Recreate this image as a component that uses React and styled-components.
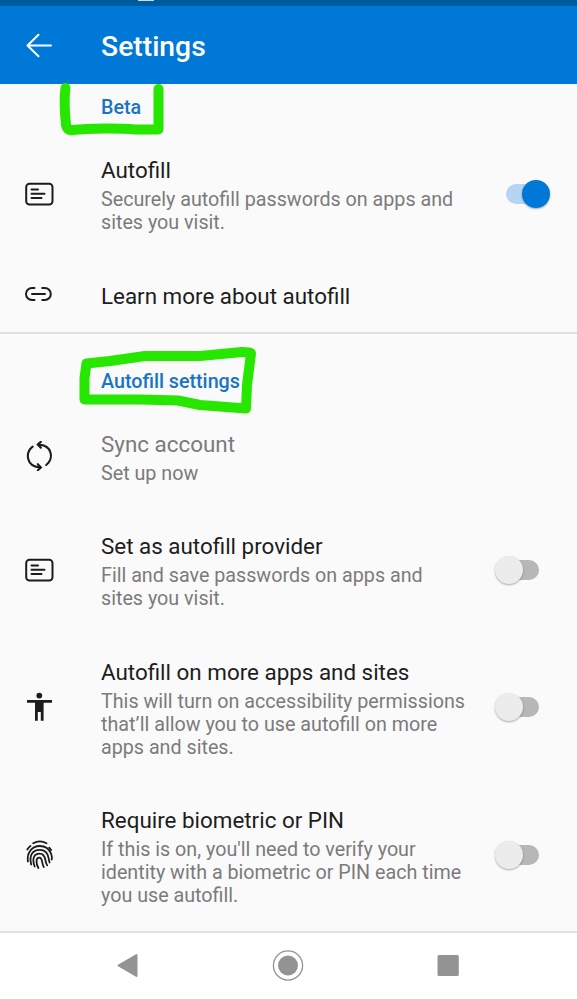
import React, { useState } from "react"
import styled, { createGlobalStyle } from "styled-components"

const GlobalStyle = createGlobalStyle`
  * {
    box-sizing: border-box;
  }

  body {
    margin: 0;
    background: #fafafa;
    font-family: Roboto, "Liberation Sans", sans-serif;
  }
`

const Screen = styled.div`
  position: relative;
  display: flex;
  flex-direction: column;
  width: 577px;
  height: 999px;
  overflow: hidden;
  background: #fafafa;
`

const StatusBar = styled.div`
  flex: none;
  height: 6px;
  padding-left: 138px;
  background: #005a9e;
`

const StatusMark = styled.div`
  width: 16px;
  height: 1px;
  background: #c4dcee;
`

const Header = styled.header`
  flex: none;
  display: flex;
  align-items: center;
  height: 78px;
  padding: 3px 0 0 25px;
  background: #0078d7;
`

const BackButton = styled.button`
  width: 76px;
  height: 30px;
  padding: 0 0 2px;
  border: none;
  background: none;
  color: #fff;
  text-align: left;
  cursor: pointer;
`

const PageTitle = styled.h1`
  margin: 0;
  color: #fff;
  font-size: 28.3px;
  font-weight: 500;
  line-height: 34px;
`

const Main = styled.main`
  flex: none;
  height: 847px;
`

const Section = styled.section`
  border-bottom: ${props => (props.$divided ? "2px solid #e0e0e0" : "none")};
`

const SectionTitle = styled.h2`
  margin: 0;
  padding: ${props => props.$top}px 0 ${props => props.$bottom}px 101px;
  color: #1874c4;
  font-size: 19.7px;
  font-weight: 500;
  line-height: 24px;
`

const Row = styled.div`
  display: grid;
  grid-template-columns: 76px 385px 1fr;
  align-items: center;
  padding: ${props => (props.$compact ? "22.3px 26px 23.2px 25px" : "22.7px 26px 22.7px 25px")};
`

const IconBox = styled.div`
  height: 30px;
  color: #1c1c1c;
`

const RowBody = styled.div`
  padding-top: 3px;
`

const RowTitle = styled.div`
  color: ${props => (props.$muted ? "#7b7b7b" : "#1d1d1d")};
  font-size: 22.4px;
  line-height: 26px;
  white-space: nowrap;
`

const RowText = styled.div`
  margin-top: 5px;
  color: #7b7b7b;
  font-size: 19.72px;
  line-height: 23px;
  white-space: pre-line;
`

const Switch = styled.button`
  display: flex;
  align-items: center;
  justify-content: ${props => (props.$on ? "flex-end" : "flex-start")};
  justify-self: ${props => (props.$on ? "end" : "start")};
  width: 33px;
  height: 20px;
  margin-left: ${props => (props.$on ? 0 : 20)}px;
  margin-right: ${props => (props.$on ? 12 : 0)}px;
  padding: 0;
  border: none;
  border-radius: 10px;
  background: ${props => (props.$on ? "#b5d5f0" : "#b7b7b7")};
  cursor: pointer;
`

const Thumb = styled.span`
  flex: none;
  width: 28px;
  height: 28px;
  margin: 0 -11px;
  border-radius: 50%;
  background: ${props => (props.$on ? "#0078d7" : "#ececec")};
  box-shadow: 0 1px 2px rgba(0, 0, 0, 0.32);
`

const NavBar = styled.nav`
  flex: 1;
  display: grid;
  grid-template-columns: 208px 161px 208px;
  border-top: 2px solid #e1e1e1;
  background: #fff;
`

const NavButton = styled.button`
  display: flex;
  justify-content: ${props => props.$align || "center"};
  padding: ${props => props.$pad};
  border: none;
  background: none;
  color: #939393;
`

const Marker = styled.svg`
  position: absolute;
  top: 0;
  left: 0;
  pointer-events: none;
`

const Icon = ({ children }) => (
  <svg
    width="30"
    height="30"
    viewBox="0 0 30 30"
    fill="none"
    stroke="currentColor"
    strokeWidth="2"
    strokeLinecap="round"
    strokeLinejoin="round"
  >
    {children}
  </svg>
)

const CardIcon = () => (
  <Icon>
    <rect x="1.2" y="4.7" width="26.3" height="20.8" rx="3.3" />
    <path d="M6.5 10.5h6.5M6.5 14.7h13M6.5 19h10" />
  </Icon>
)

const LinkIcon = () => (
  <Icon>
    <path d="M9.5 9H7a6 6 0 0 0 0 12h2.5M17.2 9h2.6a6 6 0 0 1 0 12h-2.6M7 15h13" />
  </Icon>
)

const SyncIcon = () => (
  <Icon>
    <g strokeWidth="2.1">
      <path d="M7.6 5.6C0.200 11.500 0.800 26 15.400 26.400M12.800 23.200l3.200 3.200-3.200 2.800" />
      <path d="M21.200 24C28.600 18.500 28.200 4 13.200 3.600M15.800 0.900l-3.200 2.700 3.200 3.100" />
    </g>
  </Icon>
)

const PersonIcon = () => (
  <Icon>
    <g fill="currentColor" stroke="none">
      <circle cx="14.3" cy="3.6" r="2.9" />
      <path d="M2 8h25v2.8h-8.4V28.8h-2.8V20h-3v8.8H10V10.8H2z" />
    </g>
  </Icon>
)

const FingerprintIcon = () => (
  <Icon>
    <g strokeWidth="1.8">
      <path d="M8.2 3.3C12 1 17.5 1 21.5 3.3" />
      <path d="M2.3 9.5C3.3 8 4.3 6.8 5.5 5.9" />
      <path d="M2.9 21.5C1.6 13 7 6 14.7 6c5.6 0 9.7 3.3 11.5 8 .7 2 .8 3.8.6 5.5" />
      <path d="M24.2 7.6c.8.8 1.4 1.6 1.9 2.5" />
      <path d="M6.2 24.5C3.7 15 8 9.8 14.8 9.8c5.6 0 8.2 4.2 8.8 8.4.2 1.6.6 3 1 4.3" />
      <path d="M9.7 26.5C6.7 19 8.8 13.6 14.7 13.6c4.2 0 5.2 3.6 5.7 6.4.3 2 .9 3.9 1.8 5.4" />
      <path d="M13.4 28c-2.6-5-2.8-10.4 1-10.4 3.6 0 1.8 5 4.4 9.4" />
    </g>
  </Icon>
)

const initialSettings = {
  autofill: true,
  provider: false,
  apps: false,
  biometric: false,
}

const SettingRow = ({ icon, title, text, muted, compact, checked, onToggle }) => (
  <Row $compact={compact}>
    <IconBox>{icon}</IconBox>
    <RowBody>
      <RowTitle $muted={muted}>{title}</RowTitle>
      {text && <RowText>{text}</RowText>}
    </RowBody>
    {onToggle && (
      <Switch
        role="switch"
        aria-label={title}
        aria-checked={checked}
        $on={checked}
        onClick={onToggle}
      >
        <Thumb $on={checked} />
      </Switch>
    )}
  </Row>
)

const App = () => {
  const [settings, setSettings] = useState(initialSettings)

  const toggle = key => () => setSettings({ ...settings, [key]: !settings[key] })

  return (
    <Screen>
      <GlobalStyle />
      <StatusBar>
        <StatusMark />
      </StatusBar>
      <Header>
        <BackButton aria-label="Back">
          <svg width="28" height="28" fill="none" stroke="currentColor" strokeWidth="2" strokeLinecap="round" strokeLinejoin="round">
            <path d="M26 13.5H2.5M13.5 2.8L2.5 13.5l11 10.7" />
          </svg>
        </BackButton>
        <PageTitle>Settings</PageTitle>
      </Header>
      <Main>
        <Section $divided>
          <SectionTitle $top={12} $bottom={11.5}>Beta</SectionTitle>
          <SettingRow
            icon={<CardIcon />}
            title="Autofill"
            text={"Securely autofill passwords on apps and\nsites you visit."}
            checked={settings.autofill}
            onToggle={toggle("autofill")}
          />
          <SettingRow icon={<LinkIcon />} title="Learn more about autofill" compact />
        </Section>
        <Section>
          <SectionTitle $top={36} $bottom={10.8}>Autofill settings</SectionTitle>
          <SettingRow icon={<SyncIcon />} title="Sync account" text="Set up now" muted />
          <SettingRow
            icon={<CardIcon />}
            title="Set as autofill provider"
            text={"Fill and save passwords on apps and\nsites you visit."}
            checked={settings.provider}
            onToggle={toggle("provider")}
          />
          <SettingRow
            icon={<PersonIcon />}
            title="Autofill on more apps and sites"
            text={"This will turn on accessibility permissions\nthat’ll allow you to use autofill on more\napps and sites."}
            checked={settings.apps}
            onToggle={toggle("apps")}
          />
          <SettingRow
            icon={<FingerprintIcon />}
            title="Require biometric or PIN"
            text={"If this is on, you'll need to verify your\nidentity with a biometric or PIN each time\nyou use autofill."}
            checked={settings.biometric}
            onToggle={toggle("biometric")}
          />
        </Section>
      </Main>
      <NavBar>
        <NavButton aria-label="Back" $align="flex-start" $pad="20px 0 0 117px">
          <svg width="22" height="26" fill="currentColor" stroke="currentColor" strokeWidth="2" strokeLinejoin="round">
            <path d="M1.5 12.5L19.5 2v21z" />
          </svg>
        </NavButton>
        <NavButton aria-label="Home" $pad="16px 1px 0 0">
          <svg width="32" height="32" fill="currentColor">
            <circle cx="16" cy="16.5" r="14.6" fill="none" stroke="currentColor" strokeWidth="1.3" />
            <circle cx="16" cy="16.5" r="10" />
          </svg>
        </NavButton>
        <NavButton aria-label="Recent apps" $align="flex-start" $pad="21px 0 0 68px">
          <svg width="22" height="22" fill="currentColor">
            <rect x="0.5" y="1" width="21.3" height="21" rx="1.5" />
          </svg>
        </NavButton>
      </NavBar>
      {/* hand-drawn highlights around the section titles */}
      <Marker width="577" height="999" fill="none" stroke="#27e600" strokeWidth="10" strokeLinecap="round" strokeLinejoin="round">
        <path d="M65.5 88C64 98 64.5 110 66 125Q67 131 72 130C90 128 120 128 135 129.5H158.5V89" />
        <path d="M86.5 363.5L84.5 378V399.5H140L178 400.5L200 405L246 408.5L247 385L251 353.5Q251 352 242 352L200 356H145L110 361Z" />
      </Marker>
    </Screen>
  )
}

export default App
